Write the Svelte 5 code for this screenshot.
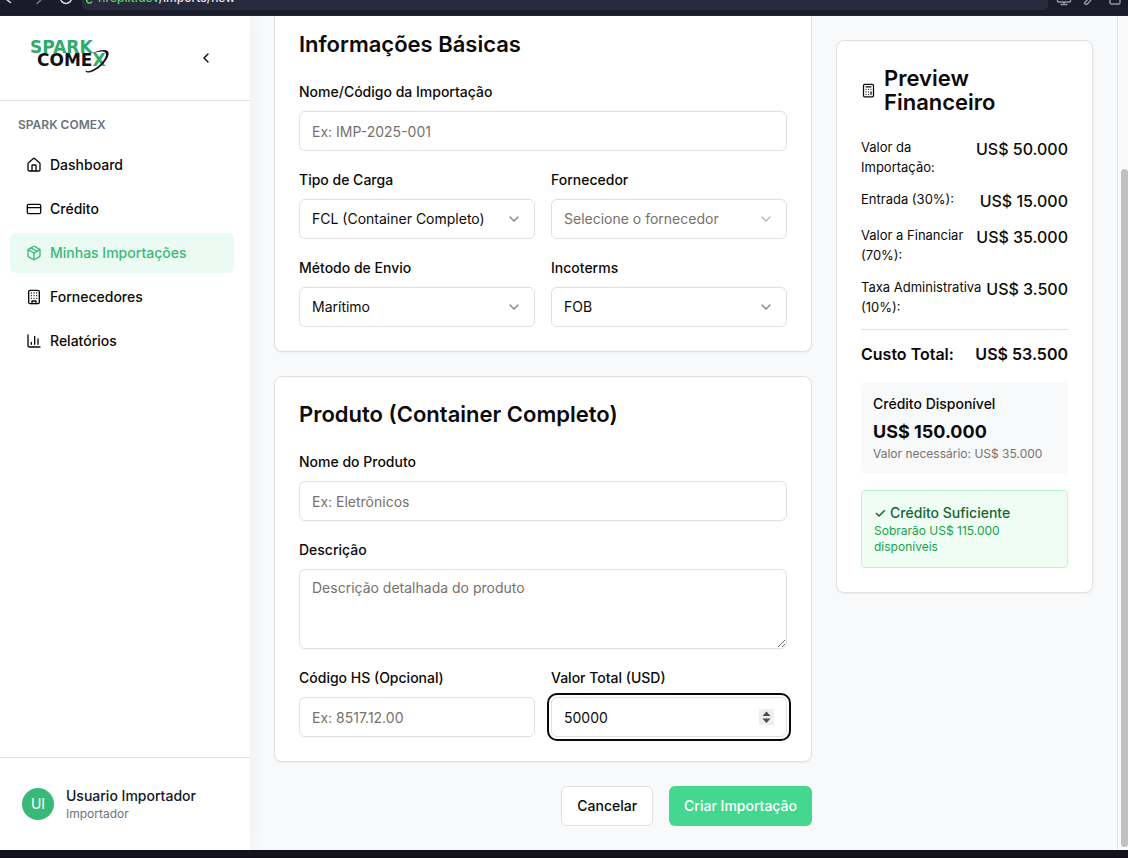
<script>
  const nav = [
    { label: 'Dashboard', icon: 'home' },
    { label: 'Crédito', icon: 'card' },
    { label: 'Minhas Importações', icon: 'package', active: true },
    { label: 'Fornecedores', icon: 'building' },
    { label: 'Relatórios', icon: 'chart' }
  ];

  const costs = [
    { label: 'Valor da Importação:', value: 'US$ 50.000' },
    { label: 'Entrada (30%):', value: 'US$ 15.000' },
    { label: 'Valor a Financiar (70%):', value: 'US$ 35.000' },
    { label: 'Taxa Administrativa (10%):', value: 'US$ 3.500' }
  ];

  let cargo = $state('fcl');
  let supplier = $state('');
  let shipping = $state('sea');
  let incoterm = $state('FOB');
  let total = $state(50000);
</script>

{#snippet icon(name, size = 16)}
  <svg class="icon" width={size} height={size} viewBox="0 0 24 24" aria-hidden="true">
    {#if name === 'home'}
      <path d="M15 21v-8a1 1 0 0 0-1-1h-4a1 1 0 0 0-1 1v8" />
      <path d="M3 10a2 2 0 0 1 .709-1.528l7-5.999a2 2 0 0 1 2.582 0l7 5.999A2 2 0 0 1 21 10v9a2 2 0 0 1-2 2H5a2 2 0 0 1-2-2z" />
    {:else if name === 'card'}
      <rect width="20" height="14" x="2" y="5" rx="2" />
      <path d="M2 10h20" />
    {:else if name === 'package'}
      <path d="M11 21.73a2 2 0 0 0 2 0l7-4A2 2 0 0 0 21 16V8a2 2 0 0 0-1-1.73l-7-4a2 2 0 0 0-2 0l-7 4A2 2 0 0 0 3 8v8a2 2 0 0 0 1 1.73z" />
      <path d="M12 22V12" />
      <path d="M3.3 7 12 12l8.7-5" />
      <path d="m7.5 4.27 9 5.15" />
    {:else if name === 'building'}
      <rect width="16" height="20" x="4" y="2" rx="2" />
      <path d="M9 22v-4h6v4M8 6h.01M16 6h.01M12 6h.01M12 10h.01M12 14h.01M16 10h.01M16 14h.01M8 10h.01M8 14h.01" />
    {:else if name === 'chart'}
      <path d="M3 3v16a2 2 0 0 0 2 2h16M18 17V9M13 17V5M8 17v-3" />
    {:else if name === 'calculator'}
      <rect width="16" height="20" x="4" y="2" rx="2" />
      <path d="M8 6h8M16 14v4M16 10h.01M12 10h.01M8 10h.01M12 14h.01M8 14h.01M12 18h.01M8 18h.01" />
    {:else if name === 'chevron-left'}
      <path d="m15 18-6-6 6-6" />
    {:else if name === 'chevron-down'}
      <path d="m6 9 6 6 6-6" />
    {/if}
  </svg>
{/snippet}

<div class="window">
  <div class="chrome">
    <svg class="chrome-nav" width="82" height="16" viewBox="0 0 82 16" aria-hidden="true">
      <path d="M12 -6 6 -1l5 4" stroke="#d5d7e4" />
      <path d="M36 -6l5.500 5.500L36.500 4" stroke="#777a8c" />
      <circle cx="66" cy="-2" r="5.500" stroke="#d5d7e4" />
    </svg>
    <div class="address">
      <svg width="12" height="10" viewBox="0 0 12 10" aria-hidden="true">
        <path d="M5 -1C4 1 5.500 3 7.500 3c1.200 0 2-.500 2.500-1.500" stroke="#5fd068" />
      </svg>
      <span class="url"><b>r.replit.dev</b>/imports/new</span>
    </div>
    <svg class="chrome-tools" width="80" height="16" viewBox="0 0 80 16" aria-hidden="true">
      <path d="M9.500 0v1a1 1 0 0 0 1 1h11a1 1 0 0 0 1-1V0M16 2v2.500M12.500 4.500h7" />
      <path d="M36 3.500l5-5.500M39 4.500l4-4.500M36 3.500l3 1" />
      <path d="M62 -4v6.500a1.500 1.500 0 0 0 1.500 1.500h7a1.500 1.500 0 0 0 1.500-1.500V-4" />
    </svg>
  </div>

  <div class="page">
    <aside class="sidebar">
      <header class="brand">
        <svg class="logo" width="84" height="44" viewBox="0 -4 84 44" role="img" aria-label="Spark Comex">
          <text x="0" y="13" fill="#2fab6c">SPARK</text>
          <text x="7" y="26" fill="#111">COME<tspan fill="#2fab6c">X</tspan></text>
          <path d="M62 13.500C69 9.500 77.500 8.500 78.500 12.500c1.500 6-10 18.500-19 20-2.500.400-4-.500-4.500-2.500 1.500 1.500 3.500 1.500 6 .500C69 27.500 77 18 76 13.500c-.800-3-7-2.500-14 0z" fill="#111" />
        </svg>
        <button class="collapse" type="button" aria-label="Recolher menu">{@render icon('chevron-left')}</button>
      </header>
      <nav>
        <h2>SPARK COMEX</h2>
        {#each nav as item}
          <a href="#{item.icon}" class:active={item.active}>{@render icon(item.icon)}{item.label}</a>
        {/each}
      </nav>
      <footer class="user">
        <span class="avatar">UI</span>
        <div>
          <div class="user-name">Usuario Importador</div>
          <div class="user-role">Importador</div>
        </div>
      </footer>
    </aside>

    <main>
      <form class="form" onsubmit={(e) => e.preventDefault()}>
        <section class="card">
          <h3>Informações Básicas</h3>
          <div class="fields">
            <div class="field wide">
              <label for="name">Nome/Código da Importação</label>
              <input id="name" type="text" placeholder="Ex: IMP-2025-001" />
            </div>
            <div class="field">
              <label for="cargo">Tipo de Carga</label>
              <div class="control">
                <select id="cargo" bind:value={cargo}>
                  <option value="fcl">FCL (Container Completo)</option>
                  <option value="lcl">LCL (Carga Fracionada)</option>
                </select>
                {@render icon('chevron-down')}
              </div>
            </div>
            <div class="field">
              <label for="supplier">Fornecedor</label>
              <div class="control" class:empty={supplier === ''}>
                <select id="supplier" bind:value={supplier}>
                  <option value="">Selecione o fornecedor</option>
                </select>
                {@render icon('chevron-down')}
              </div>
            </div>
            <div class="field">
              <label for="shipping">Método de Envio</label>
              <div class="control">
                <select id="shipping" bind:value={shipping}>
                  <option value="sea">Marítimo</option>
                  <option value="air">Aéreo</option>
                </select>
                {@render icon('chevron-down')}
              </div>
            </div>
            <div class="field">
              <label for="incoterm">Incoterms</label>
              <div class="control">
                <select id="incoterm" bind:value={incoterm}>
                  <option>FOB</option>
                  <option>CIF</option>
                </select>
                {@render icon('chevron-down')}
              </div>
            </div>
          </div>
        </section>

        <section class="card">
          <h3>Produto (Container Completo)</h3>
          <div class="fields">
            <div class="field wide">
              <label for="product">Nome do Produto</label>
              <input id="product" type="text" placeholder="Ex: Eletrônicos" />
            </div>
            <div class="field wide">
              <label for="description">Descrição</label>
              <textarea id="description" placeholder="Descrição detalhada do produto"></textarea>
            </div>
            <div class="field">
              <label for="hs">Código HS (Opcional)</label>
              <input id="hs" type="text" placeholder="Ex: 8517.12.00" />
            </div>
            <div class="field">
              <label for="total">Valor Total (USD)</label>
              <div class="control">
                <input id="total" class="current" type="number" bind:value={total} />
                <svg class="stepper" width="15" height="16" viewBox="0 0 15 16" aria-hidden="true">
                  <rect width="15" height="16" fill="#efefef" />
                  <path d="M7.500 2.500l4 4.500h-8zM7.500 14l4-4.500h-8z" fill="#4a4a4a" />
                </svg>
              </div>
            </div>
          </div>
        </section>

        <div class="actions">
          <button class="secondary" type="button">Cancelar</button>
          <button class="primary" type="submit">Criar Importação</button>
        </div>
      </form>

      <aside class="card preview">
        <h3>{@render icon('calculator', 15)}<span>Preview Financeiro</span></h3>
        <dl>
          {#each costs as row}
            <div class="cost"><dt>{row.label}</dt><dd>{row.value}</dd></div>
          {/each}
          <div class="cost sum"><dt>Custo Total:</dt><dd>US$ 53.500</dd></div>
        </dl>
        <div class="credit">
          <div class="credit-label">Crédito Disponível</div>
          <div class="credit-value">US$ 150.000</div>
          <div class="credit-note">Valor necessário: US$ 35.000</div>
        </div>
        <div class="status">
          <div class="status-title">✓ Crédito Suficiente</div>
          <div class="status-note">Sobrarão US$ 115.000 disponíveis</div>
        </div>
      </aside>
    </main>
    <div class="scroll-track"><div class="scroll-thumb"></div></div>
  </div>
  <div class="window-edge"></div>
</div>

<style>
  :global(body) {
    margin: 0;
  }

  .window,
  .window * {
    box-sizing: border-box;
  }

  .window {
    display: grid;
    grid-template-rows: 16px minmax(0, 1fr) 8px;
    height: 100vh;
    overflow: hidden;
    font-family: Inter, "Liberation Sans", sans-serif;
    font-size: 14px;
    line-height: 20px;
    color: #0c0a09;
    background: #f8f9fb;
  }

  h2,
  h3,
  dl,
  dd {
    margin: 0;
  }

  button,
  input,
  select,
  textarea {
    font: inherit;
    color: inherit;
  }

  .icon {
    flex: none;
    fill: none;
    stroke: currentColor;
    stroke-width: 2;
    stroke-linecap: round;
    stroke-linejoin: round;
  }

  .chrome {
    display: flex;
    overflow: hidden;
    background: #1b1c2b;
    border-bottom: 1px solid #232434;
  }

  .chrome svg {
    flex: none;
    fill: none;
    stroke-width: 1.5;
  }

  .chrome-tools {
    stroke: #9092a2;
  }

  .address {
    flex: 1;
    display: flex;
    align-items: flex-start;
    gap: 4px;
    height: 10px;
    background: #282a3d;
    border-radius: 0 0 5px 5px;
  }

  .url {
    margin-top: -12px;
    font-size: 12px;
    font-weight: 500;
    color: #e4e5ee;
  }

  .url b {
    font-weight: 500;
    color: #5fd068;
  }

  .page {
    display: flex;
    min-height: 0;
  }

  .sidebar {
    flex: none;
    display: flex;
    flex-direction: column;
    width: 250px;
    background: #fff;
    box-shadow: 0 0 20px rgba(0, 0, 0, 0.05);
    z-index: 1;
  }

  .brand {
    display: flex;
    align-items: center;
    justify-content: space-between;
    height: 85px;
    padding: 0 28px 0 30px;
    border-bottom: 1px solid #e0e0e0;
  }

  .logo text {
    font-family: "DejaVu Sans", sans-serif;
    font-size: 17px;
    font-weight: 700;
  }

  .collapse {
    display: grid;
    place-items: center;
    width: 32px;
    height: 32px;
    padding: 0;
    border: 0;
    background: none;
  }

  nav {
    flex: 1;
    display: flex;
    flex-direction: column;
    gap: 4px;
    padding: 16px 16px 0 10px;
  }

  nav h2 {
    margin-bottom: 8px;
    padding-left: 8px;
    font-size: 12px;
    line-height: 16px;
    font-weight: 600;
    color: #6b7280;
  }

  nav a {
    display: flex;
    align-items: center;
    gap: 8px;
    height: 40px;
    padding: 0 16px;
    border-radius: 6px;
    font-weight: 500;
    color: inherit;
    text-decoration: none;
  }

  nav a.active {
    color: #3cb878;
    background: #ebfaf3;
  }

  .user {
    display: flex;
    align-items: center;
    gap: 12px;
    height: 93px;
    padding: 0 22px;
    border-top: 1px solid #e0e0e0;
  }

  .avatar {
    display: grid;
    place-items: center;
    width: 32px;
    height: 32px;
    border-radius: 50%;
    color: #fff;
    background: #38b978;
  }

  .user-name {
    font-weight: 500;
    color: #111827;
  }

  .user-role {
    font-size: 12px;
    line-height: 16px;
    color: #6b7280;
  }

  main {
    flex: 1;
    display: grid;
    grid-template-columns: repeat(3, minmax(0, 1fr));
    align-items: start;
    gap: 24px;
    min-width: 0;
    padding: 0 24px;
    overflow: hidden;
  }

  .form {
    grid-column: span 2;
    display: flex;
    flex-direction: column;
    gap: 24px;
    margin-top: -10px;
  }

  .card {
    padding: 24px;
    border: 1px solid #e1e0df;
    border-radius: 8px;
    background: #fff;
    box-shadow: 0 1px 2px rgba(0, 0, 0, 0.05);
  }

  h3 {
    margin-bottom: 23px;
    padding-top: 1px;
    font-size: 22px;
    line-height: 24px;
    font-weight: 600;
  }

  .fields {
    display: grid;
    grid-template-columns: repeat(2, minmax(0, 1fr));
    gap: 16px;
  }

  .field {
    display: flex;
    flex-direction: column;
    gap: 6px;
  }

  .wide {
    grid-column: 1 / -1;
  }

  label {
    line-height: 26px;
    font-weight: 500;
  }

  input,
  select,
  textarea {
    width: 100%;
    height: 40px;
    margin: 0;
    padding: 0 12px;
    border: 1px solid #e1e0df;
    border-radius: 6px;
    background: #fff;
  }

  textarea {
    height: 80px;
    padding: 8px 12px;
    resize: vertical;
  }

  ::placeholder {
    color: #78716c;
    opacity: 1;
  }

  .current,
  input:focus-visible {
    outline: 2px solid #0c0a09;
    outline-offset: 2px;
  }

  input[type='number'] {
    appearance: textfield;
  }

  .control {
    display: grid;
    align-items: center;
  }

  .control > :global(*) {
    grid-area: 1 / 1;
  }

  .control select {
    appearance: none;
  }

  .control .icon,
  .stepper {
    justify-self: end;
    margin-right: 13px;
    pointer-events: none;
  }

  .control .icon {
    opacity: 0.5;
  }

  .control.empty {
    color: #78716c;
  }

  .actions {
    display: flex;
    justify-content: flex-end;
    gap: 16px;
  }

  .actions button {
    height: 40px;
    padding: 0 15px;
    border: 1px solid #e1e0df;
    border-radius: 6px;
    font-weight: 500;
    background: #fff;
  }

  .actions .primary {
    border: 0;
    color: #fff;
    background: #44d78f;
  }

  .preview {
    margin-top: 24px;
  }

  .preview h3 {
    display: flex;
    align-items: center;
    gap: 8px;
  }

  dl {
    display: flex;
    flex-direction: column;
    gap: 12px;
    margin-bottom: 16px;
  }

  .cost {
    display: flex;
    justify-content: space-between;
    font-size: 13px;
  }

  .cost dd {
    flex: none;
    font-size: 16px;
    line-height: 24px;
    font-weight: 500;
  }

  .cost.sum {
    padding-top: 12px;
    border-top: 1px solid #e1e0df;
    font-size: 16px;
    line-height: 24px;
    font-weight: 600;
  }

  .cost.sum dd {
    font-weight: 600;
  }

  .credit {
    margin-bottom: 16px;
    padding: 12px;
    border-radius: 4px;
    background: #f8f9fb;
  }

  .credit-label {
    margin-bottom: 4px;
    font-weight: 500;
  }

  .credit-value {
    font-size: 18px;
    line-height: 28px;
    font-weight: 700;
  }

  .credit-note,
  .status-note {
    font-size: 12px;
    line-height: 16px;
  }

  .credit-note {
    color: #78716c;
  }

  .status {
    padding: 12px;
    border: 1px solid #bbf7d0;
    border-radius: 4px;
    background: #f0fdf4;
  }

  .status-title {
    font-weight: 500;
    color: #166534;
  }

  .status-note {
    color: #16a34a;
  }

  .scroll-track {
    flex: none;
    display: flex;
    width: 11px;
    padding: 153px 0 3px 3px;
    border-left: 1px solid #e4e4e6;
    background: #fafafa;
  }

  .scroll-thumb {
    flex: 1;
    border-radius: 4px;
    background: #c1c1c1;
  }

  .window-edge {
    background: #12131f;
    border-bottom: 1px solid #1a0a1c;
  }
</style>
